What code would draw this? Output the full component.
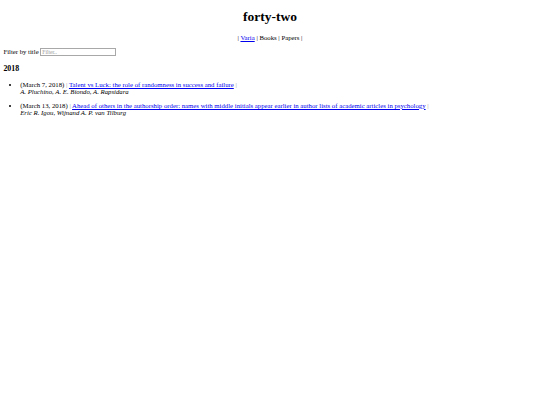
const papers = [
  {
    date: 'March 7, 2018',
    title: 'Talent vs Luck: the role of randomness in success and failure',
    authors: 'A. Pluchino, A. E. Biondo, A. Rapsidara',
  },
  {
    date: 'March 13, 2018',
    title:
      'Ahead of others in the authorship order: names with middle initials appear earlier in author lists of academic articles in psychology',
    authors: 'Eric R. Igou, Wijnand A. P. van Tilburg',
  },
];

export default function App() {
  return (
    <div className="m-[3.375px] font-['Liberation_Serif',serif] text-[6.75px] leading-[normal] text-black">
      <h1 className="my-[9.045px] text-center text-[13.5px] font-bold leading-[normal]">forty-two</h1>

      <p className="my-[6.75px] text-center">
        | <a href="#" className="text-[#0000ee] underline">Varia</a> | Books | Papers |
      </p>

      <p className="my-[6.75px]">
        Filter by title{' '}
        <input
          type="text"
          placeholder="Filter.."
          className="h-[8.6px] w-[76px] border border-[#a8a8a8] px-[1px] align-baseline text-[5.6px] leading-[normal] placeholder:text-[#9a9a9a]"
        />
      </p>

      <h3 className="my-[7.9px] text-[7.9px] font-bold leading-[normal]">2018</h3>

      <ul className="my-[6.75px] list-disc pl-[16.875px]">
        {papers.map((p) => (
          <li key={p.title}>
            <p className="my-[6.75px]">
              ({p.date}) <span className="text-[#999999]">|</span>{' '}
              <a href="#" className="text-[#0000ee] underline">
                {p.title}
              </a>{' '}
              <span className="text-[#999999]">|</span>
              <br />
              <i>{p.authors}</i>
            </p>
          </li>
        ))}
      </ul>
    </div>
  );
}
